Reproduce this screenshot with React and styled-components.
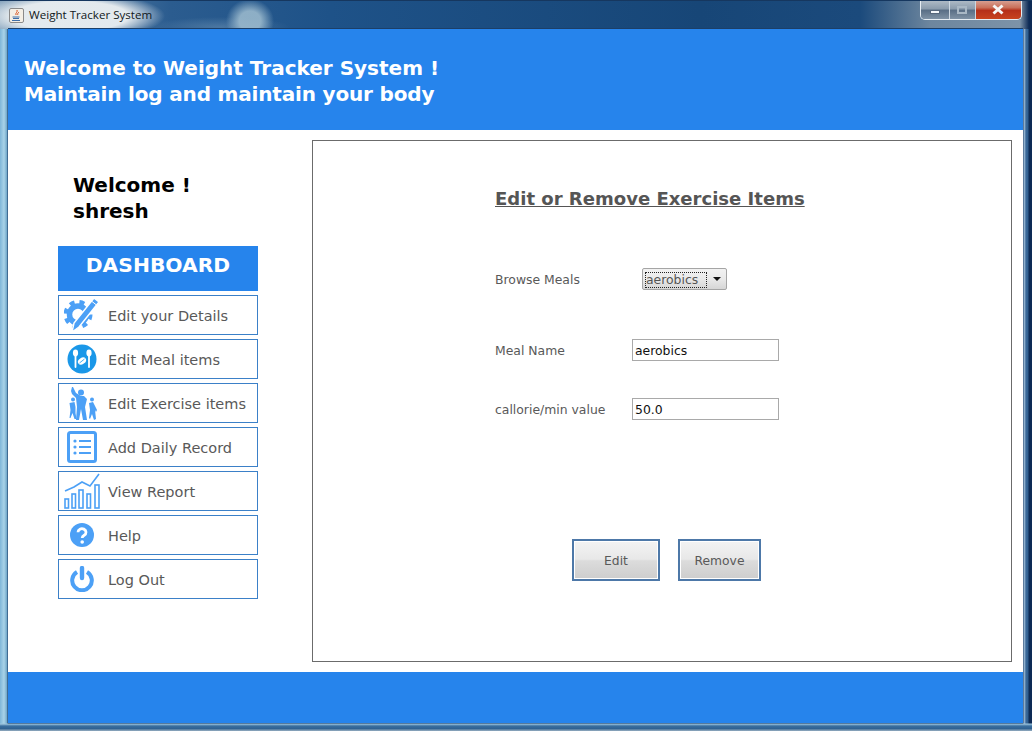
import React from "react";
import styled, { createGlobalStyle } from "styled-components";

const Global = createGlobalStyle`
  html, body { margin: 0; padding: 0; background: #10305c; }
  * { box-sizing: border-box; }
`;

const Win = styled.div`
  width: 1032px; height: 731px; overflow: hidden;
  display: flex; flex-direction: column;
  font-family: "DejaVu Sans", Verdana, sans-serif;
  background:
    linear-gradient(180deg, transparent 722px, #9cc4dc 723px, #3a6f9f 725px, #2f608f 728px, #8aa6bd 729px, #6f8ca8 731px),
    linear-gradient(90deg, #7fb6d8 0, #a9d3e8 4px, #6fa6c8 7px, transparent 8px, transparent 1023px, #a9c6de 1024px, #3c6a9a 1026px, #2f5f90 1028px, #0d2a55 1029px);
  border-top: 1px solid #16375f;
`;
const TitleBar = styled.div`
  height: 28px; flex: none; display: flex; align-items: flex-start;
  padding-left: 9px;
  background:
    radial-gradient(ellipse 95px 24px at 70px 15px, rgba(232,237,240,.97) 62%, rgba(232,237,240,0) 100%),
    radial-gradient(ellipse 24px 22px at 250px 20px, rgba(160,190,208,.85) 45%, rgba(160,190,208,0) 100%),
    radial-gradient(ellipse 70px 10px at 220px 26px, rgba(120,155,185,.45), rgba(120,155,185,0)),
    linear-gradient(90deg, #7c9cb8 0, #2b5c8f 170px, #1e5288 330px, #174677 700px, #1b4a7c 860px, #6d869e 930px, #7d93a8 1020px, #0d2a55 1029px);
`;
const AppIcon = styled.svg`
  width: 15px; height: 15px; margin-top: 7px; flex: none;
`;
const TitleText = styled.span`
  margin: 6px 0 0 5px;
  font: 11.6px/15px "Open Sans", "Noto Sans", sans-serif;
  color: #101820;
`;
const Controls = styled.div`
  margin: -1px 10px 0 auto; height: 20px; width: 102px;
  display: flex; flex: none;
  border: 1px solid #e6edf3; border-top: 0; border-radius: 0 0 5px 5px;
  overflow: hidden;
`;
const Ctl = styled.div`
  flex: ${p => p.$grow};
  display: flex; align-items: center; justify-content: center;
  border-right: ${p => (p.$last ? "0" : "1px solid #cdd8e2")};
  background: ${p => p.$close
    ? "linear-gradient(#d9a598 0, #c9705a 40%, #b5301a 55%, #c8431f 100%)"
    : "linear-gradient(#b1bdc8 0, #8c9dae 45%, #5a6f86 55%, #7f92a5 100%)"};
`;
const MinGlyph = styled.div`
  width: 10px; height: 4px; margin-top: 4px; background: #f4f7fa; border: 1px solid #56677c;
`;
const MaxGlyph = styled.div`
  width: 10px; height: 8px; border: 2px solid #a9b8c5; background: transparent;
`;
const CloseGlyph = styled.svg`
  width: 14px; height: 11px;
`;
const Client = styled.div`
  flex: 1; margin: 0 9px 8px 8px; display: flex; flex-direction: column;
  background: #fff; min-height: 0;
  box-shadow: 0 -1px 0 0 #1c3f68;
`;
const Header = styled.header`
  height: 101px; flex: none; background: #2684ec;
  padding: 26px 0 0 16px; color: #fff;
  font-weight: 700; font-size: 20px; line-height: 26px;
`;
const HeaderLine = styled.div`
  letter-spacing: ${p => p.$spacing || 0}px;
`;
const Main = styled.main`
  flex: 1; display: flex; min-height: 0;
`;
const Sidebar = styled.aside`
  width: 304px; flex: none; padding: 42px 0 0 50px;
`;
const Greeting = styled.div`
  padding-left: 15px; font-weight: 700; font-size: 20px; line-height: 26px; color: #000;
`;
const DashTitle = styled.div`
  margin-top: 22px; width: 200px; height: 45px; background: #2684ec; color: #fff;
  font-weight: 700; font-size: 20.3px; line-height: 38px; text-align: center;
`;
const Nav = styled.nav`
  margin-top: 4px; width: 200px; display: flex; flex-direction: column; gap: 4px;
`;
const NavItem = styled.div`
  height: 40px; border: 1px solid #3b80c8; display: flex; align-items: center;
  font-size: 14.5px; color: #595959; background: #fff;
`;
const IconSlot = styled.span`
  width: 46px; margin-right: 3px; flex: none; display: flex; justify-content: center; align-items: center; height: 100%;
`;
const NavLabel = styled.span`
  padding-top: 2px;
`;
const Panel = styled.section`
  width: 700px; height: 522px; margin-top: 10px; border: 1px solid #6b6b6b;
  padding: 46px 0 0 182px; background: #fff;
`;
const PanelTitle = styled.h2`
  margin: 0; font-size: 18.05px; line-height: 24px; font-weight: 700; color: #555;
  text-decoration: underline;
`;
const Row = styled.div`
  display: flex; align-items: center; height: 22px; margin-top: ${p => p.$mt}px;
  font-size: 12.4px; color: #595959;
`;
const Label = styled.label`
  width: ${p => p.$w}px; flex: none; padding-top: 1px;
`;
const SelectBox = styled.div`
  width: 85px; height: 22px; display: flex; align-items: center; padding: 2px;
  border: 1px solid #a5a5a5; border-radius: 2px;
  background: linear-gradient(#f2f2f2, #e9e9e9 50%, #d6d6d6);
`;
const SelectValue = styled.span`
  flex: none; width: 62px; height: 16px; line-height: 16px; padding-left: 1px; margin-top: 1px;
  outline: 1px dotted #222; outline-offset: -1px; font-size: 12.4px; color: #555;
`;
const Caret = styled.span`
  margin-left: 6px; width: 0; height: 0;
  border-left: 4px solid transparent; border-right: 4px solid transparent; border-top: 4px solid #111;
`;
const Field = styled.div`
  width: 147px; height: 22px; border: 1px solid #a9a9a9; background: #fff;
  padding-left: 2px; line-height: 21px; font-size: 12.4px; color: #111;
`;
const Buttons = styled.div`
  display: flex; gap: 18px; margin: 119px 0 0 77px;
`;
const Btn = styled.div`
  width: ${p => p.$w}px; height: 42px; display: flex; align-items: center; justify-content: center;
  border: 2px solid #4d78a8; box-shadow: inset 0 0 0 1px #fff;
  padding-top: 1px;
  background: linear-gradient(#f3f3f3 0, #e8e8e8 48%, #dcdcdc 52%, #cdcdcd 100%);
  font-size: 12.3px; color: #595959;
`;
const Footer = styled.footer`
  height: 51px; flex: none; margin-top: 10px; background: #2684ec;
`;

const blue = "#4ca0f6";

const GearPen = () => (
  <svg width="36" height="34" viewBox="0 0 36 34" fill="none">
    <circle cx="14" cy="16.5" r="8.5" stroke={blue} strokeWidth="5.5"/>
    <circle cx="14" cy="16.5" r="12.5" stroke={blue} strokeWidth="4" strokeDasharray="5 5"/>
    <path d="M30 0l5 4-20 25-7 5 2-9z" fill={blue} stroke="#fff" strokeWidth="1.5"/>
    <path d="M28 3.5l4.5 3.5" stroke="#fff" strokeWidth="1"/>
  </svg>
);
const MealIcon = () => (
  <svg width="30" height="30" viewBox="0 0 30 30">
    <circle cx="15" cy="15" r="14.5" fill="#1a97e8"/>
    <g fill="#fff">
      <ellipse cx="8.5" cy="9" rx="2.6" ry="3.4"/>
      <rect x="7.6" y="11" width="1.8" height="13" rx=".9"/>
      <ellipse cx="22" cy="9" rx="2.6" ry="3.4"/>
      <rect x="21.1" y="11" width="1.8" height="13" rx=".9"/>
      <ellipse cx="15" cy="17" rx="4.4" ry="3.2" transform="rotate(-35 15 17)"/>
    </g>
    <path d="M12.5 19l5-4" stroke="#1a97e8" strokeWidth=".8"/>
  </svg>
);
const ExerciseIcon = () => (
  <svg width="29" height="36" viewBox="0 0 29 36" fill={blue}>
    <circle cx="13" cy="7.5" r="3"/>
    <path d="M3 6l1-4 1 0 3 6 5 3 3 0 3 3-2 8 2 13-4 0-2-11-2 11-3 0 1-13-1-9-4-4z"/>
    <circle cx="5" cy="14.5" r="2"/>
    <path d="M1.5 18l5-1 1 5 0 6 1 6-2 0-2-6-2 5-1 0 1-8z"/>
    <circle cx="24" cy="14.5" r="2"/>
    <path d="M21 18l4-1 4 8-1 2-1-2 1 9-2 1-2-6-2 5-1-1 1-8z"/>
  </svg>
);
const ListIcon = () => (
  <svg width="30" height="32" viewBox="0 0 30 32" fill="none">
    <rect x="1.5" y="1.5" width="27" height="29" rx="2" stroke={blue} strokeWidth="3" />
    <g fill={blue}>
      <circle cx="8" cy="10" r="1.6"/><rect x="12" y="9" width="12" height="2"/>
      <circle cx="8" cy="16" r="1.6"/><rect x="12" y="15" width="12" height="2"/>
      <circle cx="8" cy="22" r="1.6"/><rect x="12" y="21" width="12" height="2"/>
    </g>
  </svg>
);
const ChartIcon = () => (
  <svg width="37" height="37" viewBox="0 0 37 37" fill="none" stroke={blue} strokeWidth="1.6">
    <path d="M1 18l9-4 8-5 8 4 9-12"/>
    <rect x="1" y="26" width="3.5" height="9"/>
    <rect x="8" y="21" width="3.5" height="14"/>
    <rect x="15" y="17" width="4" height="18"/>
    <rect x="23" y="21" width="3.5" height="14"/>
    <rect x="31" y="12" width="4" height="23"/>
  </svg>
);
const HelpIcon = () => (
  <svg width="24" height="24" viewBox="0 0 24 24">
    <circle cx="12" cy="12" r="12" fill={blue}/>
    <path d="M8 9.3a4 3.6 0 1 1 6.2 3c-1.4.9-2 1.4-2 2.7" fill="none" stroke="#fff" strokeWidth="2.8"/>
    <circle cx="12.2" cy="19" r="1.8" fill="#fff"/>
  </svg>
);
const PowerIcon = () => (
  <svg width="24" height="26" viewBox="0 0 24 26" fill="none" stroke={blue}>
    <path d="M7 6a9.8 9.8 0 1 0 10 0" strokeWidth="4" />
    <path d="M12 2v10" strokeWidth="4.4" strokeLinecap="round"/>
  </svg>
);

const items = [
  ["Edit your Details", <GearPen />],
  ["Edit Meal items", <MealIcon />],
  ["Edit Exercise items", <ExerciseIcon />],
  ["Add Daily Record", <ListIcon />],
  ["View Report", <ChartIcon />],
  ["Help", <HelpIcon />],
  ["Log Out", <PowerIcon />],
];

export default function App() {
  return (
    <>
      <Global />
      <Win>
        <TitleBar>
          <AppIcon viewBox="0 0 15 15">
            <rect x=".5" y=".5" width="14" height="14" rx="1.5" fill="#f4efe6" stroke="#8a8a8a"/>
            <path d="M8 2c1 2-2 3-1 5M10 4c-1 1-2 2-1 3" stroke="#d8501c" fill="none" strokeWidth="1"/>
            <path d="M3.5 9h7M4 10.5h6M3 12.5h8" stroke="#3f6fa8" strokeWidth="1"/>
          </AppIcon>
          <TitleText>Weight Tracker System</TitleText>
          <Controls>
            <Ctl $grow="29"><MinGlyph /></Ctl>
            <Ctl $grow="26"><MaxGlyph /></Ctl>
            <Ctl $grow="47" $close $last>
              <CloseGlyph viewBox="0 0 14 11">
                <path d="M2.5 1.5l9 8M11.5 1.5l-9 8" stroke="#f6f6f6" strokeWidth="3"/>
              </CloseGlyph>
            </Ctl>
          </Controls>
        </TitleBar>
        <Client>
          <Header>
            <HeaderLine>Welcome to Weight Tracker System !</HeaderLine>
            <HeaderLine $spacing={-0.17}>Maintain log and maintain your body</HeaderLine>
          </Header>
          <Main>
            <Sidebar>
              <Greeting>Welcome !<br />shresh</Greeting>
              <DashTitle>DASHBOARD</DashTitle>
              <Nav>
                {items.map(([t, ic]) => (
                  <NavItem key={t}>
                    <IconSlot>{ic}</IconSlot>
                    <NavLabel>{t}</NavLabel>
                  </NavItem>
                ))}
              </Nav>
            </Sidebar>
            <Panel>
              <PanelTitle>Edit or Remove Exercise Items</PanelTitle>
              <Row $mt={57}>
                <Label $w={147}>Browse Meals</Label>
                <SelectBox><SelectValue>aerobics</SelectValue><Caret /></SelectBox>
              </Row>
              <Row $mt={49}>
                <Label $w={137}>Meal Name</Label>
                <Field>aerobics</Field>
              </Row>
              <Row $mt={37}>
                <Label $w={137}>callorie/min value</Label>
                <Field>50.0</Field>
              </Row>
              <Buttons>
                <Btn $w={88}>Edit</Btn>
                <Btn $w={83}>Remove</Btn>
              </Buttons>
            </Panel>
          </Main>
          <Footer />
        </Client>
      </Win>
    </>
  );
}
